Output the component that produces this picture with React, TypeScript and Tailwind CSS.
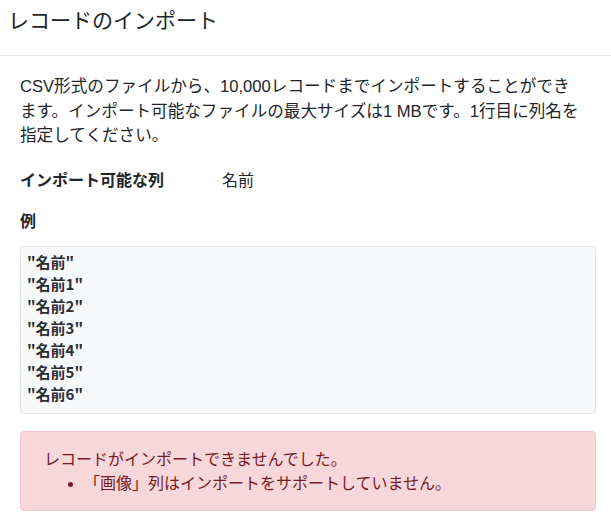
import React from 'react'

const EXAMPLE_ROWS = ['"名前"', '"名前1"', '"名前2"', '"名前3"', '"名前4"', '"名前5"', '"名前6"']

export default function App() {
  return (
    <div
      className="w-[611px] h-[517px] bg-white text-[#212529] overflow-hidden"
      style={{ fontFamily: '"Liberation Sans", "Noto Sans CJK JP", sans-serif' }}
    >
      {/* header */}
      <div className="pl-2 pt-[5px] pb-[19px] border-b border-[#e9ecef]">
        <h5 className="text-[21px] leading-[31px] font-normal">レコードのインポート</h5>
      </div>

      {/* body */}
      <div className="pl-5 pr-[15px] pt-[19px]">
        <p className="text-[16.6px] leading-[24.5px] whitespace-nowrap">
          CSV形式のファイルから、10,000レコードまでインポートすることができ
          <br />
          ます。インポート可能なファイルの最大サイズは1 MBです。1行目に列名を
          <br />
          指定してください。
        </p>

        <div className="flex mt-[20px] text-[16px] leading-[24px]">
          <span className="w-[202px] font-bold">インポート可能な列</span>
          <span>名前</span>
        </div>

        <p className="mt-[17px] text-[16px] leading-[24px] font-bold">例</p>

        <pre
          className="mt-[12px] bg-[#f8f9fa] border border-[#e3e6e9] rounded pl-[6px] pt-[4px] pb-[8px] text-[15px] leading-[22px] font-semibold text-[#2a2e33]"
          style={{ fontFamily: '"Noto Sans CJK JP", sans-serif' }}
        >
          {EXAMPLE_ROWS.join('\n')}
        </pre>

        <div className="mt-[17px] bg-[#f8d7da] border border-[#f5c6cb] rounded text-[#721c24] pl-[23px] pt-4 pb-[14px] text-[16px] leading-[24px]">
          <p>レコードがインポートできませんでした。</p>
          <ul className="list-disc pl-10">
            <li>「画像」列はインポートをサポートしていません。</li>
          </ul>
        </div>
      </div>
    </div>
  )
}
